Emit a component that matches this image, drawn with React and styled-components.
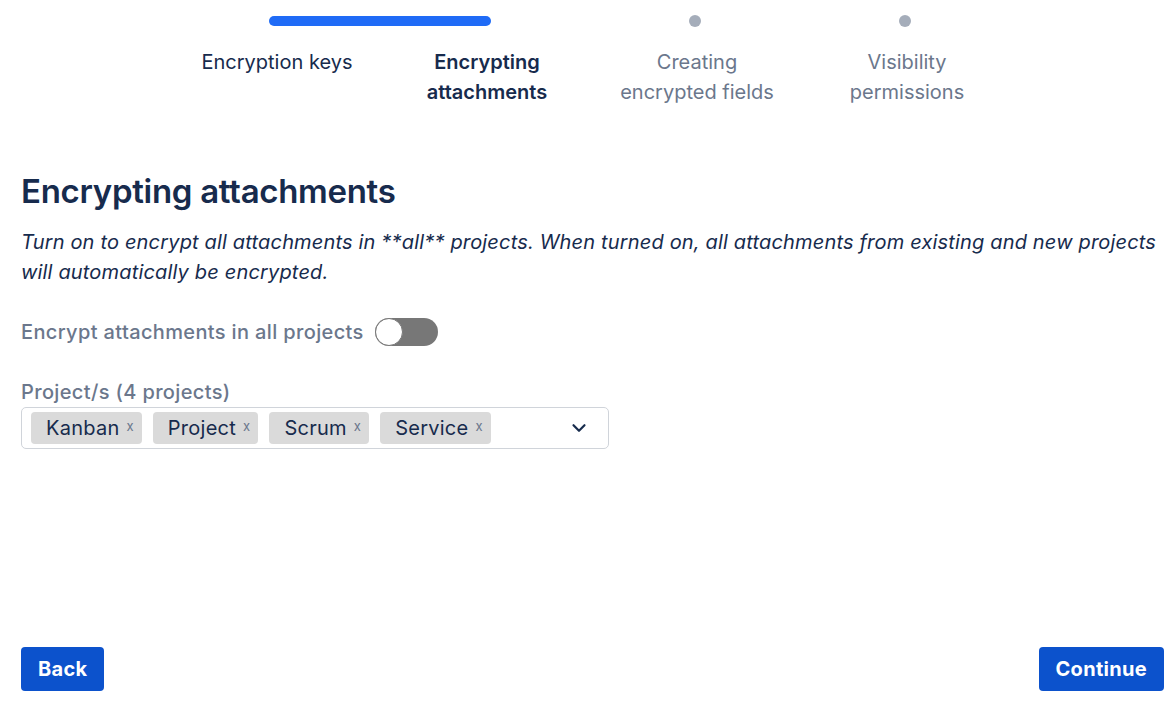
import styled, { createGlobalStyle } from 'styled-components'

const GlobalStyle = createGlobalStyle`
  body {
    margin: 0;
    background: #fff;
    font-family: Inter, "Noto Sans", sans-serif;
    color: #172B4D;
  }
`

const steps = [
  { label: 'Encryption keys', state: 'done' },
  { label: 'Encrypting\nattachments', state: 'current' },
  { label: 'Creating\nencrypted fields', state: 'todo' },
  { label: 'Visibility\npermissions', state: 'todo' },
]

const projects = ['Kanban', 'Project', 'Scrum', 'Service']

const App = () => {
  return (
    <>
      <GlobalStyle />
      <Page>
        <Stepper>
          <Bar />
          <Dot $col={3} />
          <Dot $col={4} />
          {steps.map((s, i) => (
            <StepLabel key={s.label} $col={i + 1} $state={s.state}>{s.label}</StepLabel>
          ))}
        </Stepper>

        <Title>Encrypting attachments</Title>
        <Intro>
          Turn on to encrypt all attachments in **all** projects. When turned on, all attachments from existing and new projects will automatically be encrypted.
        </Intro>

        <ToggleRow>
          <FieldLabel>Encrypt attachments in all projects</FieldLabel>
          <Toggle><Knob /></Toggle>
        </ToggleRow>

        <FieldLabel>Project/s (4 projects)</FieldLabel>
        <SelectBox>
          <Chips>
            {projects.map(p => (
              <Chip key={p}>{p}<ChipX>x</ChipX></Chip>
            ))}
          </Chips>
          <Chevron viewBox="0 0 24 24" fill="none" stroke="#172B4D" strokeWidth="2.4" strokeLinecap="round" strokeLinejoin="round">
            <path d="M6 9l6 6 6-6" />
          </Chevron>
        </SelectBox>

        <Footer>
          <Button>Back</Button>
          <Button>Continue</Button>
        </Footer>
      </Page>
    </>
  )
}

const Page = styled.div`
  display: flex;
  flex-direction: column;
  min-height: 100vh;
  box-sizing: border-box;
  padding: 16px 7px 10px 21px;
`

const Stepper = styled.div`
  display: grid;
  grid-template-columns: repeat(4, 210px);
  grid-template-rows: 10px auto;
  row-gap: 21px;
  margin-left: 151px;
  margin-bottom: 64px;
`

const Bar = styled.div`
  grid-column: 1 / 3;
  grid-row: 1;
  margin: 0 101px 0 97px;
  height: 10px;
  border-radius: 5px;
  background: #1F6BF6;
`

const Dot = styled.div`
  grid-column: ${p => p.$col};
  grid-row: 1;
  justify-self: center;
  width: 12px;
  height: 12px;
  margin: -1px 4px 0 0;
  border-radius: 50%;
  background: #A5ADBA;
`

const StepLabel = styled.div`
  grid-column: ${p => p.$col};
  grid-row: 2;
  text-align: center;
  white-space: pre-line;
  font-size: 20px;
  line-height: 30px;
  font-weight: ${p => p.$state === 'current' ? 600 : 400};
  color: ${p => p.$state === 'todo' ? '#6B778C' : '#172B4D'};
`

const Title = styled.h1`
  margin: 0 0 16px;
  font-size: 33px;
  line-height: 40px;
  font-weight: 600;
  letter-spacing: -0.3px;
  color: #172B4D;
`

const Intro = styled.p`
  margin: 0 0 30px;
  font-size: 20px;
  line-height: 30px;
  font-style: italic;
  letter-spacing: 0.17px;
  color: #172B4D;
`

const ToggleRow = styled.div`
  display: flex;
  align-items: center;
  gap: 11px;
  margin-bottom: 30px;
`

const FieldLabel = styled.div`
  font-size: 20px;
  line-height: 30px;
  font-weight: 500;
  letter-spacing: 0.36px;
  color: #6B778C;
`

const Toggle = styled.div`
  display: flex;
  align-items: center;
  width: 63px;
  height: 28px;
  border-radius: 14px;
  background: #777;
`

const Knob = styled.div`
  width: 28px;
  height: 28px;
  border-radius: 50%;
  background: #fff;
  border: 1.5px solid #777;
  box-sizing: border-box;
`

const SelectBox = styled.div`
  display: flex;
  align-items: center;
  justify-content: space-between;
  width: 588px;
  height: 42px;
  box-sizing: border-box;
  padding: 0 18px 0 9px;
  border: 1px solid #D0D4DA;
  border-radius: 5px;
`

const Chips = styled.div`
  display: flex;
  gap: 11px;
`

const Chip = styled.div`
  display: flex;
  align-items: center;
  height: 32px;
  padding: 0 8px 0 15px;
  border-radius: 4px;
  background: #DADADA;
  font-size: 20px;
  letter-spacing: 0.25px;
  color: #172B4D;
`

const ChipX = styled.span`
  margin-left: 7px;
  font-size: 13px;
  color: #6B778C;
  position: relative;
  top: -2px;
`

const Chevron = styled.svg`
  width: 22px;
  height: 22px;
`

const Footer = styled.div`
  display: flex;
  justify-content: space-between;
  margin-top: auto;
`

const Button = styled.button`
  height: 44px;
  padding: 0 17px;
  border: none;
  border-radius: 4px;
  background: #0C52CC;
  color: #fff;
  font-family: inherit;
  font-size: 20px;
  font-weight: 700;
  letter-spacing: 0.3px;
  cursor: pointer;
`

export default App
